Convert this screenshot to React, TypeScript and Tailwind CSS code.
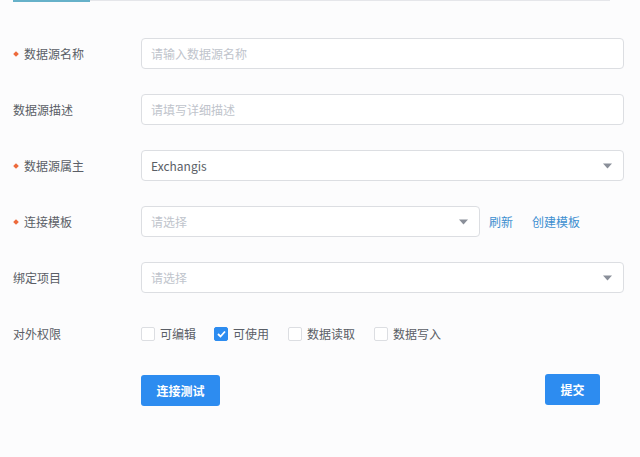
import { useState } from 'react';

const font = { fontFamily: '"Noto Sans CJK SC", "Noto Sans", sans-serif' };

function Label({ text, required }: { text: string; required?: boolean }) {
  return (
    <div className="w-[141px] shrink-0 pl-[13px] flex items-center text-[12px] text-[#5a5e66]">
      {required && <span className="w-[4px] h-[4px] rotate-45 bg-[#ed6a3c] mr-[6px] ml-px" />}
      <span>{text}</span>
    </div>
  );
}

function Arrow() {
  return (
    <svg width="9" height="6" viewBox="0 0 9 6" className="shrink-0">
      <path d="M0 0.5 L9 0.5 L4.5 5.5 Z" fill="#8a8f99" />
    </svg>
  );
}

function Field({ placeholder, value, select, className = 'flex-1' }: { placeholder?: string; value?: string; select?: boolean; className?: string }) {
  return (
    <div className={`${className} h-[31px] border border-[#dcdee2] rounded-[4px] bg-white flex items-center pl-[9px] pr-[11px]`}>
      <span className={`flex-1 text-[12px] ${value ? 'text-[#5a5e66]' : 'text-[#c0c4cc]'}`}>{value || placeholder}</span>
      {select && <Arrow />}
    </div>
  );
}

function Check({ label, checked, onClick }: { label: string; checked: boolean; onClick: () => void }) {
  return (
    <button type="button" onClick={onClick} className="flex items-center gap-[5px] text-[12px] text-[#5a5e66]">
      <span className={`w-[14px] h-[14px] rounded-[2px] border flex items-center justify-center ${checked ? 'bg-[#2d8cf0] border-[#2d8cf0]' : 'bg-white border-[#dcdee2]'}`}>
        {checked && (
          <svg width="9" height="8" viewBox="0 0 9 8">
            <path d="M1 4 L3.5 6.5 L8 1.5" stroke="white" strokeWidth="1.8" fill="none" />
          </svg>
        )}
      </span>
      <span>{label}</span>
    </button>
  );
}

export default function App() {
  const [perms, setPerms] = useState([false, true, false, false]);
  const toggle = (i: number) => setPerms(p => p.map((v, j) => (j === i ? !v : v)));
  const permLabels = ['可编辑', '可使用', '数据读取', '数据写入'];
  const permGaps = ['mr-[18px]', 'mr-[19px]', 'mr-[19px]', ''];

  return (
    <div className="w-[640px] h-[457px] bg-[#fcfcfd] overflow-hidden" style={font}>
      <div className="flex items-start h-[2px]">
        <div className="ml-[13px] w-[77px] h-[2px] bg-[#66b1c9]" />
        <div className="flex-1 h-px bg-[#e5e6ea] mr-[30px]" />
      </div>

      <div className="pt-[36px] flex flex-col gap-[25px] pr-[16px]">
        <div className="flex h-[31px]">
          <Label text="数据源名称" required />
          <Field placeholder="请输入数据源名称" />
        </div>
        <div className="flex h-[31px]">
          <Label text="数据源描述" />
          <Field placeholder="请填写详细描述" />
        </div>
        <div className="flex h-[31px]">
          <Label text="数据源属主" required />
          <Field value="Exchangis" select />
        </div>
        <div className="flex h-[31px] items-center">
          <Label text="连接模板" required />
          <Field placeholder="请选择" select className="w-[339px]" />
          <a className="ml-[9px] text-[12px] text-[#3d8fd0] cursor-pointer">刷新</a>
          <a className="ml-[19px] text-[12px] text-[#3d8fd0] cursor-pointer">创建模板</a>
        </div>
        <div className="flex h-[31px]">
          <Label text="绑定项目" />
          <Field placeholder="请选择" select />
        </div>
        <div className="flex h-[31px]">
          <Label text="对外权限" />
          <div className="flex items-center">
            {permLabels.map((l, i) => (
              <div key={l} className={permGaps[i]}>
                <Check label={l} checked={perms[i]} onClick={() => toggle(i)} />
              </div>
            ))}
          </div>
        </div>
      </div>

      <div className="mt-[26px] flex items-start justify-between pl-[141px] pr-[40px]">
        <button className="w-[79px] h-[31px] rounded-[3px] bg-[#2d8cf0] text-white text-[12px] font-semibold">连接测试</button>
        <button className="w-[55px] h-[31px] -mt-px rounded-[3px] bg-[#2d8cf0] text-white text-[12px] font-semibold">提交</button>
      </div>
    </div>
  );
}
